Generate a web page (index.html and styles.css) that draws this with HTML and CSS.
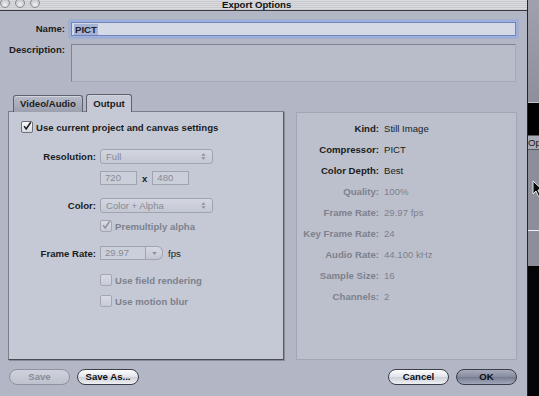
FILE: index.html
```html
<!DOCTYPE html>
<html>
<head>
<meta charset="utf-8">
<title>Export Options</title>
<link rel="stylesheet" href="styles.css">
</head>
<body>
<div class="screen">
	<div class="window">
		<div class="titlebar">
			<div class="lights"><span></span><span></span><span></span></div>
			<div class="title">Export Options</div>
		</div>

		<div class="meta">
			<label class="meta-label">Name:</label>
			<div class="name-field"><span class="sel">PICT</span></div>
			<label class="meta-label desc-label">Description:</label>
			<div class="desc-field"></div>
		</div>

		<div class="tabs">
			<span class="tab">Video/Audio</span>
			<span class="tab active">Output</span>
		</div>

		<div class="panels">
			<div class="settings">
				<div class="check-row main-check">
					<span class="box checked"><svg viewBox="0 0 12 12"><path d="M2.5 6.2 L5 9.5 L10.5 1.5" /></svg></span>
					<span class="check-text">Use current project and canvas settings</span>
				</div>

				<div class="row r-res">
					<span class="lbl">Resolution:</span>
					<span class="popup">Full<i class="updown"><svg viewBox="0 0 6 10"><path d="M0.5 4 L3 1 L5.5 4 Z M0.5 6 L3 9 L5.5 6 Z" /></svg></i></span>
				</div>
				<div class="row r-size">
					<span class="lbl"></span>
					<span class="field">720</span>
					<span class="times">x</span>
					<span class="field">480</span>
				</div>
				<div class="row r-color">
					<span class="lbl">Color:</span>
					<span class="popup">Color + Alpha<i class="updown"><svg viewBox="0 0 6 10"><path d="M0.5 4 L3 1 L5.5 4 Z M0.5 6 L3 9 L5.5 6 Z" /></svg></i></span>
				</div>
				<div class="row r-premult">
					<span class="lbl"></span>
					<span class="box checked off"><svg viewBox="0 0 12 12"><path d="M2.5 6.2 L5 9.5 L10.5 1.5" /></svg></span>
					<span class="check-text dim">Premultiply alpha</span>
				</div>
				<div class="row r-rate">
					<span class="lbl">Frame Rate:</span>
					<span class="combo"><span class="combo-text">29.97</span><span class="combo-btn"><svg viewBox="0 0 6 4"><path d="M0 0 L6 0 L3 4 Z" /></svg></span></span>
					<span class="unit">fps</span>
				</div>
				<div class="row r-field">
					<span class="lbl"></span>
					<span class="box off"></span>
					<span class="check-text dim">Use field rendering</span>
				</div>
				<div class="row r-blur">
					<span class="lbl"></span>
					<span class="box off"></span>
					<span class="check-text dim">Use motion blur</span>
				</div>
			</div>

			<div class="summary">
				<span class="k">Kind:</span><span class="v">Still Image</span>
				<span class="k">Compressor:</span><span class="v">PICT</span>
				<span class="k">Color Depth:</span><span class="v">Best</span>
				<span class="k dim">Quality:</span><span class="v dim">100%</span>
				<span class="k dim">Frame Rate:</span><span class="v dim">29.97 fps</span>
				<span class="k dim">Key Frame Rate:</span><span class="v dim">24</span>
				<span class="k dim">Audio Rate:</span><span class="v dim">44.100 kHz</span>
				<span class="k dim">Sample Size:</span><span class="v dim">16</span>
				<span class="k dim">Channels:</span><span class="v dim">2</span>
			</div>
		</div>

		<div class="actions">
			<span class="btn disabled">Save</span>
			<span class="btn">Save As...</span>
			<span class="spacer"></span>
			<span class="btn">Cancel</span>
			<span class="btn default">OK</span>
		</div>
	</div>

	<div class="behind">
		<div class="behind-top"></div>
		<div class="behind-line"></div>
		<div class="behind-tab">Op</div>
		<div class="behind-mid"></div>
		<div class="behind-rule"></div>
		<div class="behind-low"></div>
		<div class="behind-dark"></div>
	</div>

	<svg class="cursor" viewBox="0 0 12 18"><path d="M1 1 L1 14 L4 11 L6.5 16.5 L8.5 15.5 L6 10 L10.5 10 Z" /></svg>
</div>
</body>
</html>
```

FILE: styles.css
```css
html, body { margin: 0 }
body {

	background: #000;
	font-family: "Liberation Sans", Arial, sans-serif;
	font-size: 9.6px;
	color: #1b1c20;
}

.screen {

	display: flex;
	width: 539px;
	height: 396px;
	overflow: hidden;
	position: relative;
}

.window {

	width: 527px;
	height: 396px;
	background: #b3b7c5;
	display: flex;
	flex-direction: column;
	flex: none;
}

/*

	title bar
*/
.titlebar {

	height: 10px;
	border-bottom: 1px solid #3a3b42;
	background: repeating-linear-gradient(#dadbdf 0 1px, #c9cace 1px 2px);
	display: flex;
	align-items: flex-start;
}
.lights {

	display: flex;
	gap: 5px;
	margin-top: -2px;
}
.lights span {

	width: 8px;
	height: 8px;
	border-radius: 50%;
	border: 1px solid #8a8c94;
	background: radial-gradient(circle at 50% 70%, #f2f2f4, #b2b4bc);
}
.title {

	margin-left: 182px;
	font-weight: bold;
	line-height: 10px;
	color: #111;
}

/*

	name and description
*/
.meta {

	display: grid;
	grid-template-columns: 65px 1fr;
	column-gap: 6px;
	margin: 11px 11px 0 0;
}
.meta-label {

	font-weight: bold;
	text-align: right;
	line-height: 14px;
}
.name-field {

	height: 14px;
	background: #d5d9e5;
	border: 1px solid #6f83b8;
	box-sizing: border-box;
	box-shadow: 0 0 0 1px #9db1e2, 0 0 2px 2px #8ea6dc;
	padding: 1px 2px;
	line-height: 11px;
}
.sel {

	background: #a7b3d2;
	font-weight: bold;
	color: #1c2030;
	padding: 0 1px;
}
.desc-label {

	margin-top: 8px;
	line-height: 12px;
}
.desc-field {

	margin-top: 8px;
	height: 38px;
	background: #b9bdca;
	border: 1px solid #80848f;
	border-right-color: #a8abb6;
	border-bottom-color: #a8abb6;
	box-sizing: border-box;
}

/*

	tabs
*/
.tabs {

	display: flex;
	gap: 3px;
	margin: 12px 0 -1px 13px;
	position: relative;
	z-index: 1;
	align-items: flex-end;
}
.tab {

	font-weight: bold;
	height: 16px;
	line-height: 16px;
	padding: 0 6px;
	border: 1px solid #5f626d;
	border-bottom: none;
	border-radius: 3px 3px 0 0;
	background: linear-gradient(#b7bbc8, #9da1af);
	box-shadow: inset 0 1px 0 #d2d5de;
}
.tab:first-child { width: 56px; text-align: center }
.tab.active {

	height: 17px;
	line-height: 17px;
	background: #c5c9d6;
	width: 32px;
	text-align: center;
}

/*

	panels
*/
.panels {

	display: flex;
	gap: 12px;
	margin: 0 10px 0 8px;
	height: 249px;
}
.settings {

	width: 276px;
	box-sizing: border-box;
	background: #c5c9d6;
	border: 1px solid #7b7e89;
	border-bottom-color: #4a4c55;
	border-right-color: #5a5c66;
	box-shadow: 1px 1px 0 #8a8d98;
	padding: 9px 0 0 12px;
}
.summary {

	flex: 1;
	background: #bcc0cc;
	border: 1px solid #a2a6b2;
	margin-top: 1px;
	display: grid;
	grid-template-columns: 82px 1fr;
	column-gap: 5px;
	grid-auto-rows: 21px;
	align-content: start;
	padding-top: 5px;
	line-height: 21px;
}
.summary .k {

	font-weight: bold;
	text-align: right;
}
.dim { color: #7d818d }

/*

	controls
*/
.check-row, .row {

	display: flex;
	align-items: center;
}
.box {

	width: 12px;
	height: 12px;
	box-sizing: border-box;
	border: 1px solid #6e717c;
	border-radius: 2px;
	background: linear-gradient(#fbfbfc, #d6d9e1);
	flex: none;
	display: flex;
}
.box svg {

	width: 12px;
	height: 12px;
	margin: -2px 0 0 0;
	fill: none;
	stroke: #1a1b22;
	stroke-width: 1.8;
}
.box.off {

	border-color: #a4a7b2;
	background: linear-gradient(#d8dbe3, #c7cbd6);
}
.box.off svg { stroke: #8e929d }
.check-text {

	font-weight: bold;
	margin-left: 3px;
}
.row .lbl {

	width: 87px;
	margin-left: -12px;
	text-align: right;
	font-weight: bold;
	margin-right: 4px;
	flex: none;
}
.r-res { margin-top: 16px }
.r-size { margin-top: 7px }
.r-color { margin-top: 13px }
.r-premult { margin-top: 7px }
.r-rate { margin-top: 14px }
.r-field { margin-top: 14px }
.r-blur { margin-top: 9px }

.popup {

	width: 113px;
	height: 15px;
	box-sizing: border-box;
	border: 1px solid #a0a4b0;
	border-radius: 3px;
	background: linear-gradient(#d3d6e0, #c4c8d3);
	color: #878b97;
	padding-left: 5px;
	line-height: 13px;
	position: relative;
}
.updown {

	position: absolute;
	right: 6px;
	top: 2px;
	width: 5px;
	height: 9px;
	display: flex;
}
.updown svg { width: 5px; height: 9px; fill: #8c909b }

.field {

	width: 37px;
	height: 14px;
	box-sizing: border-box;
	border: 1px solid #a0a4b0;
	background: #cbcfda;
	color: #878b97;
	padding-left: 4px;
	line-height: 12px;
}
.times {

	font-weight: bold;
	margin: 0 5px;
}

.combo {

	display: flex;
	height: 14px;
	width: 63px;
}
.combo-text {

	width: 46px;
	box-sizing: border-box;
	border: 1px solid #a0a4b0;
	background: #cbcfda;
	color: #878b97;
	padding-left: 4px;
	line-height: 12px;
}
.combo-btn {

	flex: 1;
	border: 1px solid #a0a4b0;
	border-left: none;
	border-radius: 0 6px 6px 0;
	background: linear-gradient(#d6d9e2, #c3c7d2);
	display: flex;
	align-items: center;
	justify-content: center;
}
.combo-btn svg { width: 5px; height: 3px; fill: #8c909b }
.unit { margin-left: 5px }

/*

	buttons
*/
.actions {

	display: flex;
	gap: 7px;
	margin: 9px 10px 0 9px;
}
.spacer { flex: 1 }
.btn {

	width: 62px;
	height: 16px;
	box-sizing: border-box;
	border: 1px solid #3c3e47;
	border-radius: 8px;
	background: linear-gradient(#fdfdfe 0%, #e2e4ea 50%, #cdd0d9 51%, #eef0f4 100%);
	font-weight: bold;
	text-align: center;
	line-height: 14px;
	color: #0d0e12;
}
.btn.disabled {

	border-color: #8f929e;
	background: linear-gradient(#cfd2dc, #bec2cd);
	color: #888c98;
	width: 61px;
}
.btn.default {

	background: linear-gradient(#a6abbd 0%, #868c9f 50%, #767c90 51%, #a2a8ba 100%);
	width: 61px;
}
.actions .btn:nth-child(4) { width: 61px }

/*

	window behind
*/
.behind {

	flex: 1;
	border-left: 1px solid #25262c;
	display: flex;
	flex-direction: column;
}
.behind-top {

	height: 102px;
	background: linear-gradient(#9fa2ad, #8d909b);
}
.behind-line {

	height: 1px;
	background: #bfc2cb;
}
.behind-mid, .behind-low {

	background: #8c8f9a;
}
.behind-tab {

	margin-top: 32px;
	height: 13px;
	line-height: 13px;
	background: #a9acb7;
	border-top: 1px solid #55575f;
	border-bottom: 1px solid #55575f;
	font-size: 9.6px;
	color: #15161a;
	white-space: nowrap;
	overflow: hidden;
}
.behind-mid { height: 80px }
.behind-rule {

	height: 1px;
	background: #f0f1f4;
}
.behind-low { height: 35px }
.behind-dark {

	flex: 1;
	background: #050507;
}

.cursor {

	position: absolute;
	left: 532px;
	top: 180px;
	width: 12px;
	height: 18px;
	fill: #0a0a0c;
	stroke: #e8e8ec;
	stroke-width: 1;
}
```
